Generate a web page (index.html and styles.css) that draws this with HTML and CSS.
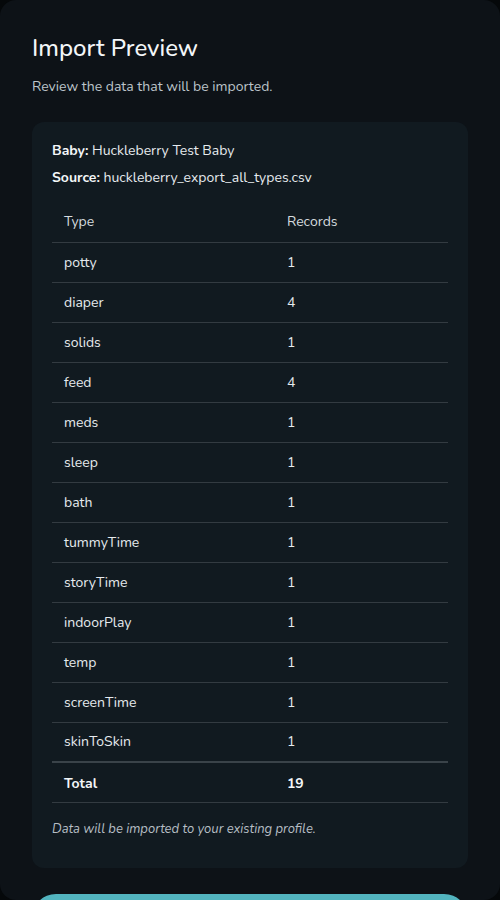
FILE: index.html
```html
<!DOCTYPE html>
<html lang="en">
<head>
  <meta charset="UTF-8">
  <meta name="viewport" content="width=device-width, initial-scale=1.0">
  <title>Import Preview</title>
  <link rel="stylesheet" href="styles.css">
</head>
<body>

<div class="modal">
  <h2 class="title">Import Preview</h2>
  <p class="subtitle">Review the data that will be imported.</p>

  <div class="card">
    <p class="meta"><strong>Baby:</strong> Huckleberry Test Baby</p>
    <p class="meta"><strong>Source:</strong> huckleberry_export_all_types.csv</p>

    <table class="summary">
      <thead>
        <tr><th>Type</th><th>Records</th></tr>
      </thead>
      <tbody>
        <tr><td>potty</td><td>1</td></tr>
        <tr><td>diaper</td><td>4</td></tr>
        <tr><td>solids</td><td>1</td></tr>
        <tr><td>feed</td><td>4</td></tr>
        <tr><td>meds</td><td>1</td></tr>
        <tr><td>sleep</td><td>1</td></tr>
        <tr><td>bath</td><td>1</td></tr>
        <tr><td>tummyTime</td><td>1</td></tr>
        <tr><td>storyTime</td><td>1</td></tr>
        <tr><td>indoorPlay</td><td>1</td></tr>
        <tr><td>temp</td><td>1</td></tr>
        <tr><td>screenTime</td><td>1</td></tr>
        <tr><td>skinToSkin</td><td>1</td></tr>
      </tbody>
      <tfoot>
        <tr><td>Total</td><td>19</td></tr>
      </tfoot>
    </table>

    <p class="note">Data will be imported to your existing profile.</p>
  </div>

  <button class="confirm" type="button" aria-label="Import"></button>
</div>

</body>
</html>
```

FILE: styles.css
```css
body {
  margin: 0;
  background: #05080a;
  font-family: "Nunito", Lato, "Open Sans", sans-serif;
  color: #e6ebee;
}
.modal {
  height: 900px;
  box-sizing: border-box;
  padding: 32px 32px 0;
  background: #0d1217;
  border-radius: 16px;
  overflow: hidden;
}
.title {
  margin: 0;
  font-size: 24px;
  line-height: 32px;
  font-weight: 500;
  color: #f3f6f8;
}
.subtitle {
  margin: 13px 0 25px;
  font-size: 14px;
  line-height: 20px;
  color: #bcc4ca;
}
.card {
  background: #111a20;
  border-radius: 12px;
  padding: 19px 20px 29px;
}
.meta {
  margin: 0 0 7px;
  font-size: 14px;
  line-height: 20px;
  color: #e6ebee;
}
.meta strong {
  font-weight: 700;
  color: #f3f6f8;
}
.summary {
  width: 100%;
  margin-top: 14px;
  border-collapse: collapse;
  font-size: 14px;
}
.summary th,
.summary td {
  height: 40px;
  padding: 0 12px;
  text-align: left;
  box-sizing: border-box;
  border-bottom: 1px solid #333b41;
}
.summary th {
  font-weight: 400;
  color: #d5dbdf;
}
.summary th:first-child {
  width: 56.3%;
}
.summary tfoot td {
  padding-top: 2px;
  font-weight: 700;
  color: #f3f6f8;
  border-top: 2px solid #3a4349;
}
.note {
  margin: 16px 0 0;
  font-size: 13px;
  line-height: 20px;
  font-style: italic;
  color: #b6bec4;
}
.confirm {
  display: block;
  width: 100%;
  margin-top: 26px;
  height: 48px;
  border: none;
  border-radius: 24px;
  background: #52b4bf;
}
```
